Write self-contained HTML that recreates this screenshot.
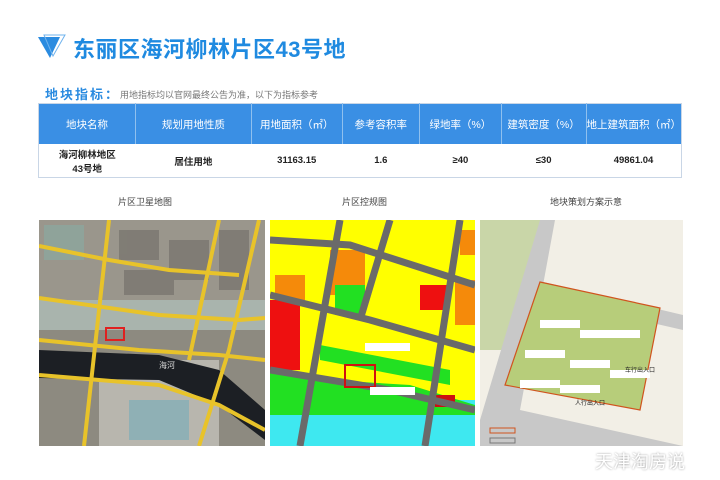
<!DOCTYPE html>
<html><head><meta charset="utf-8"><style>
body{margin:0;width:720px;height:480px;background:#fff;font-family:"Liberation Sans","Noto Sans CJK SC",sans-serif;position:relative;overflow:hidden}
.a{position:absolute}
table{border-collapse:collapse;position:absolute;left:38px;top:103px;width:644px;font-size:10.5px;text-align:center;border:1px solid #c9d6e6}
th{background:#3a8fe4;color:#fff;font-weight:normal;height:40px;border-right:1px solid #8fc0ee;padding:0;white-space:nowrap}
td{height:33px;font-weight:bold;color:#222;font-size:9.5px;padding:0}
.cap{font-size:9px;color:#444;top:195px}
</style></head><body>
<svg class="a" style="left:38px;top:34px" width="30" height="28"><polygon points="0,3 22,3 12,24" fill="#2a8be0"/><polygon points="6,1 27,1 15,22" fill="none" stroke="#6fb3ee" stroke-width="1"/></svg>
<div class="a" style="left:73px;top:32px;font-size:22px;font-weight:bold;color:#1f8ae0;letter-spacing:0.5px">东丽区海河柳林片区43号地</div>
<div class="a" style="left:45px;top:84px;font-size:13px;font-weight:bold;color:#2a8be0;letter-spacing:2px">地块指标：</div>
<div class="a" style="left:120px;top:88px;font-size:9px;color:#777">用地指标均以官网最终公告为准，以下为指标参考</div>
<table><tr><th style="width:97px">地块名称</th><th style="width:116px">规划用地性质</th><th style="width:90px">用地面积（㎡）</th><th style="width:77px">参考容积率</th><th style="width:81px">绿地率（%）</th><th style="width:84px">建筑密度（%）</th><th style="border-right:none">地上建筑面积（㎡）</th></tr>
<tr><td>海河柳林地区<br>43号地</td><td>居住用地</td><td>31163.15</td><td>1.6</td><td>≥40</td><td>≤30</td><td>49861.04</td></tr></table>
<div class="a cap" style="left:118px">片区卫星地图</div>
<div class="a cap" style="left:342px">片区控规图</div>
<div class="a cap" style="left:550px">地块策划方案示意</div>
<svg class="a" style="left:39px;top:220px" width="226" height="226">
<rect width="226" height="226" fill="#8d8a80"/>
<rect x="0" y="0" width="226" height="80" fill="#9a968c"/>
<g fill="#6f6c66" opacity="0.6"><rect x="80" y="10" width="40" height="30"/><rect x="130" y="20" width="40" height="40"/><rect x="85" y="50" width="50" height="25"/><rect x="180" y="10" width="30" height="60"/></g>
<rect x="5" y="5" width="40" height="35" fill="#8fa39a"/>
<rect x="0" y="80" width="226" height="30" fill="#a9b4ad"/>
<rect x="60" y="140" width="120" height="86" fill="#b8b6ae"/>
<rect x="90" y="180" width="60" height="40" fill="#8fb0b5"/>
<path d="M0,130 L120,135 L180,150 L226,190 L226,220 L180,185 L120,160 L0,158Z" fill="#1c1f24"/>
<g stroke="#e8c32a" stroke-width="4" fill="none"><path d="M0,26 L70,40 L130,50 L200,55"/><path d="M0,78 L120,95 L200,100 L226,98"/><path d="M0,120 L100,130 L180,135 L226,140"/><path d="M0,155 L120,165 L180,185 L226,210"/><path d="M70,0 L45,226"/><path d="M180,0 L150,140"/><path d="M220,0 L190,130 L160,226"/></g>
<rect x="67" y="108" width="18" height="12" fill="none" stroke="#e02020" stroke-width="2"/>
<text x="120" y="148" font-size="8" fill="#ddd">海河</text>
</svg>
<svg class="a" style="left:270px;top:220px" width="205" height="226">
<rect width="205" height="226" fill="#ffff00"/>
<rect x="0" y="180" width="205" height="46" fill="#3ee8f0"/>
<path d="M0,145 L60,160 L140,165 L205,185 L205,195 L0,195Z" fill="#22e022"/>
<path d="M50,125 L180,150 L180,165 L50,140Z" fill="#22e022"/>
<rect x="0" y="80" width="30" height="70" fill="#ee1010"/>
<rect x="60" y="30" width="35" height="45" fill="#f58a0a"/>
<rect x="65" y="65" width="30" height="30" fill="#22e022"/>
<rect x="5" y="55" width="30" height="25" fill="#f58a0a"/>
<rect x="150" y="65" width="28" height="25" fill="#ee1010"/>
<rect x="185" y="60" width="20" height="45" fill="#f58a0a"/>
<rect x="190" y="10" width="15" height="25" fill="#f58a0a"/>
<rect x="165" y="175" width="20" height="12" fill="#cc1010"/>
<g stroke="#6a6a6a" stroke-width="7" fill="none"><path d="M0,20 L80,25 L205,65"/><path d="M0,75 L100,100 L205,130"/><path d="M0,150 L120,170 L205,190"/><path d="M70,0 L30,226"/><path d="M120,0 L90,100"/><path d="M190,0 L155,226"/></g>
<rect x="75" y="145" width="30" height="22" fill="none" stroke="#d01010" stroke-width="2"/>
<rect x="95" y="123" width="45" height="8" fill="#fff"/><rect x="100" y="167" width="45" height="8" fill="#fff"/>
</svg>
<svg class="a" style="left:480px;top:220px" width="203" height="226">
<rect width="203" height="226" fill="#f2efe6"/>
<rect width="60" height="130" fill="#c9d6a8"/>
<path d="M60,0 L75,0 L40,190 L203,226 L0,226 L0,200 Z" fill="#c8c8c8"/>
<path d="M55,60 L203,95 L203,110 L50,75Z" fill="#c8c8c8"/>
<path d="M60,62 L180,88 L160,190 L25,165Z" fill="#b7cd7a" stroke="#d0541e" stroke-width="1.2"/>
<g fill="#fff"><rect x="60" y="100" width="40" height="8"/><rect x="100" y="110" width="40" height="8"/><rect x="45" y="130" width="40" height="8"/><rect x="90" y="140" width="40" height="8"/><rect x="130" y="150" width="40" height="8"/><rect x="40" y="160" width="40" height="8"/><rect x="80" y="165" width="40" height="8"/><rect x="120" y="110" width="40" height="8"/></g>
<rect x="10" y="208" width="25" height="5" fill="none" stroke="#d0541e"/>
<rect x="10" y="218" width="25" height="5" fill="none" stroke="#777"/>
<text x="95" y="185" font-size="6" fill="#222">人行出入口</text>
<text x="145" y="152" font-size="6" fill="#222">车行出入口</text>
</svg>
<div class="a" style="left:595px;top:448px;font-size:18px;color:#fff;text-shadow:0 0 2px #999">天津淘房说</div>
</body></html>
